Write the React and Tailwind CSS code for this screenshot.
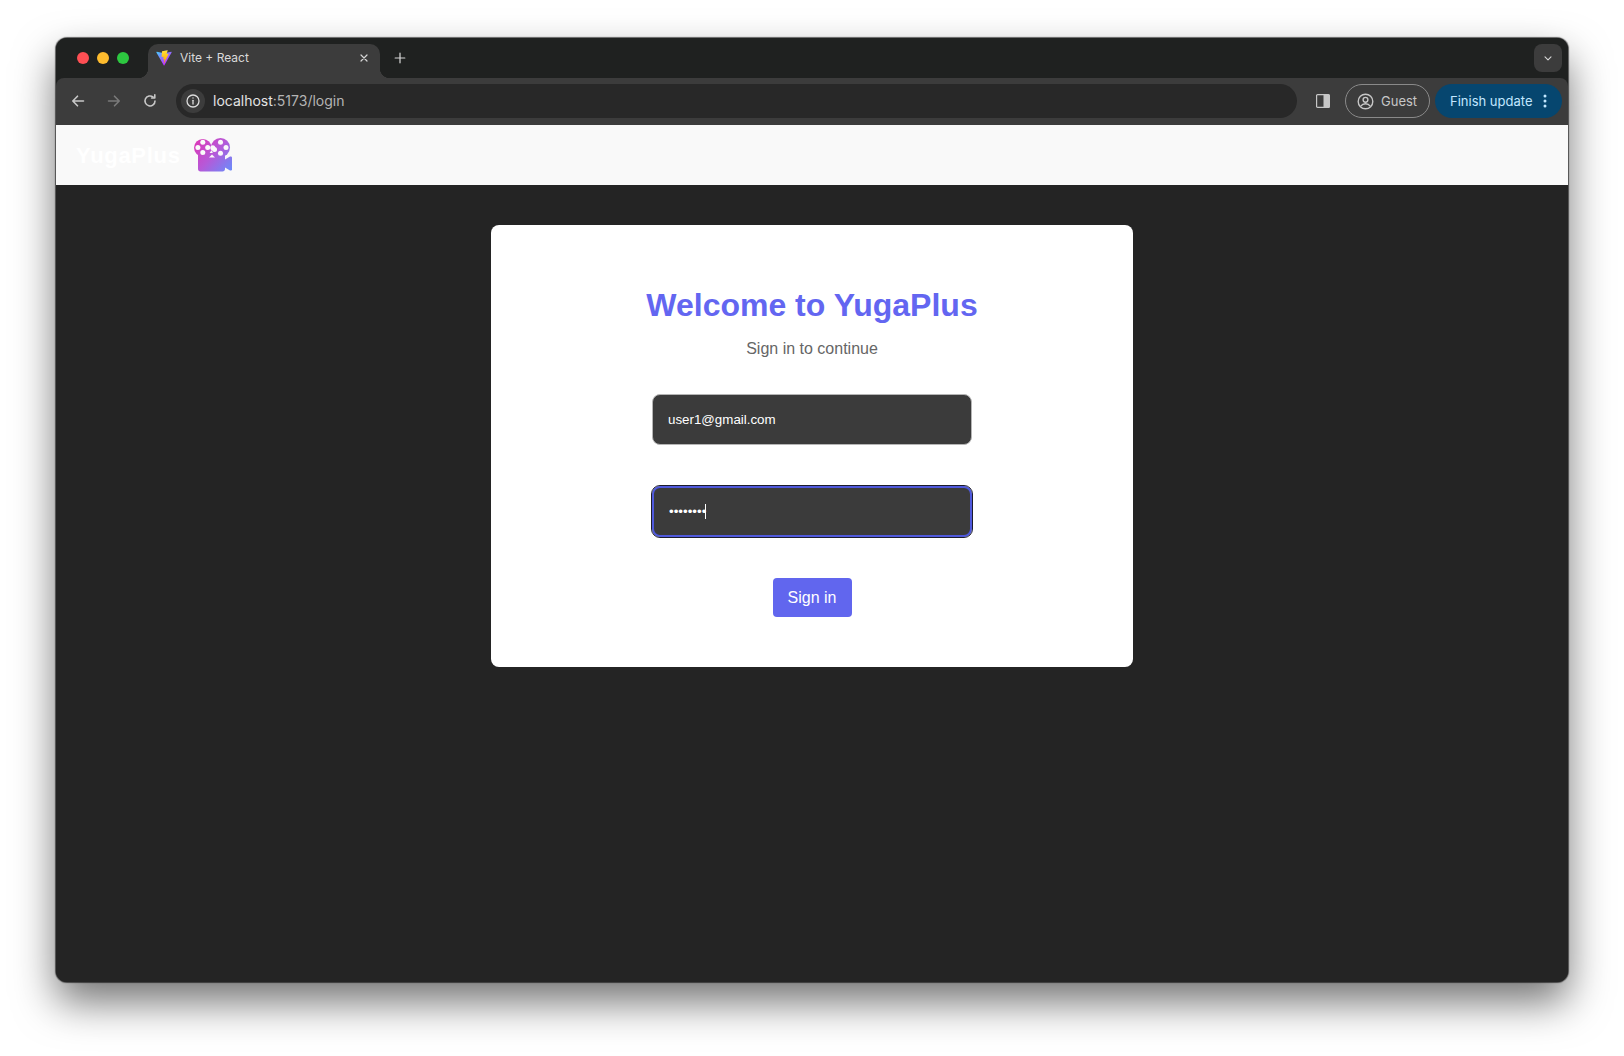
import React from "react";

function ViteIcon() {
  return (
    <svg width="16" height="16" viewBox="0 0 410 404" fill="none">
      <defs>
        <linearGradient id="va" x1="6" y1="33" x2="235" y2="344" gradientUnits="userSpaceOnUse">
          <stop stopColor="#41D1FF" />
          <stop offset="1" stopColor="#BD34FE" />
        </linearGradient>
        <linearGradient id="vb" x1="194.65" y1="8.82" x2="236.08" y2="292.99" gradientUnits="userSpaceOnUse">
          <stop stopColor="#FFEA83" />
          <stop offset="0.083" stopColor="#FFDD35" />
          <stop offset="1" stopColor="#FFA800" />
        </linearGradient>
      </defs>
      <path d="M399.641 59.5246L215.643 388.545C211.844 395.338 202.084 395.378 198.228 388.618L10.5817 59.5563C6.38087 52.1896 12.6802 43.2665 21.0281 44.7586L205.223 77.6824C206.398 77.8924 207.601 77.8904 208.776 77.6763L389.119 44.8058C397.439 43.2894 403.768 52.1434 399.641 59.5246Z" fill="url(#va)" />
      <path d="M292.965 1.5744L156.801 28.2552C154.563 28.6937 152.906 30.5903 152.771 32.8664L144.395 174.33C144.198 177.662 147.258 180.248 150.51 179.498L188.42 170.749C191.967 169.931 195.172 173.055 194.443 176.622L183.18 231.775C182.422 235.487 185.907 238.661 189.532 237.56L212.947 230.446C216.577 229.344 220.065 232.527 219.297 236.242L201.398 322.875C200.278 328.294 207.486 331.249 210.492 326.603L212.5 323.5L323.454 102.072C325.312 98.3645 322.108 94.137 318.036 94.9228L279.014 102.454C275.347 103.161 272.227 99.746 273.262 96.1583L298.731 7.86689C299.767 4.27314 296.636 0.855181 292.965 1.5744Z" fill="url(#vb)" />
    </svg>
  );
}

function FilmIcon() {
  return (
    <svg width="38" height="34" viewBox="0 0 38 34">
      <defs>
        <linearGradient id="film" x1="2" y1="2" x2="36" y2="32" gradientUnits="userSpaceOnUse">
          <stop stopColor="#dc38b8" />
          <stop offset="0.5" stopColor="#b659d8" />
          <stop offset="1" stopColor="#6f88f8" />
        </linearGradient>
      </defs>
      <circle cx="8.8" cy="9.8" r="8.8" fill="url(#film)" />
      <circle cx="26.5" cy="9.5" r="9.5" fill="url(#film)" />
      <path
        fill="url(#film)"
        d="M4 15H31V21.5L36 18.6C36.8 18.2 38 18.6 38 19.6V31.4C38 32.4 36.8 32.9 36 32.4L31 29.5V31C31 32.6 30 33.5 28.5 33.5H6.5C5 33.5 4 32.5 4 31Z"
      />
      {[[8.8, 4.3], [3.9, 9.4], [13.7, 9.4], [8.8, 14.5], [20.5, 11.5], [26.5, 4.3], [32, 9.5], [26.5, 15.2], [18.8, 9.8]].map(([x, y], i) => (
        <circle key={i} cx={x} cy={y} r="2.5" fill="#fafafa" />
      ))}
      <path d="M15 19.5L18 16.5L21 19.5Z" fill="#fafafa" />
    </svg>
  );
}

function Stroke({ children, size = 16, w = 1.6, color = "#c7c7c7" }) {
  return (
    <svg width={size} height={size} viewBox="0 0 16 16" fill="none" stroke={color} strokeWidth={w} strokeLinecap="round" strokeLinejoin="round">
      {children}
    </svg>
  );
}

export default function App() {
  return (
    <div className="w-[1624px] h-[1056px] bg-white overflow-hidden pt-[38px] pl-[56px] font-['Liberation_Sans',Arial,sans-serif]">
      <div className="w-[1512px] h-[944px] flex flex-col rounded-[11px] overflow-hidden bg-[#242424] shadow-[0_20px_42px_rgba(0,0,0,0.55),0_0_1px_1px_rgba(90,90,90,0.9)]">
        {/* tab strip */}
        <div className="h-[40px] shrink-0 flex bg-[#1f2120] pt-[6px] font-['Inter',sans-serif]">
          <div className="w-[92px] h-[28px] flex items-center gap-2 pl-[21px]">
            <span className="w-3 h-3 rounded-full bg-[#fe4f54]" />
            <span className="w-3 h-3 rounded-full bg-[#febc2e]" />
            <span className="w-3 h-3 rounded-full bg-[#2dc840]" />
          </div>
          <div className="relative w-[232px] h-[34px] flex items-center bg-[#3c3c3c] rounded-t-[10px] pl-2 pr-[10px] pb-[6px]">
            <span className="absolute left-[-10px] bottom-0 w-[10px] h-[10px] bg-[radial-gradient(circle_at_0_0,transparent_10px,#3c3c3c_10.5px)]" />
            <span className="absolute right-[-10px] bottom-0 w-[10px] h-[10px] bg-[radial-gradient(circle_at_100%_0,transparent_10px,#3c3c3c_10.5px)]" />
            <ViteIcon />
            <span className="ml-2 text-[12px] text-[#d9d9d9] flex-1">Vite + React</span>
            <Stroke size={12} w={1.6} color="#d6d6d6"><path d="M4 4L12 12M12 4L4 12" /></Stroke>
          </div>
          <div className="w-[40px] h-[28px] flex items-center justify-center">
            <Stroke size={14} w={1.4} color="#d6d6d6"><path d="M8 2.5V13.5M2.5 8H13.5" /></Stroke>
          </div>
          <div className="flex-1" />
          <div className="w-[28px] h-[28px] mr-[6px] rounded-[8px] bg-[#3c3c3c] flex items-center justify-center">
            <Stroke size={12} w={1.5} color="#d6d6d6"><path d="M4 6.5L8 10.5L12 6.5" /></Stroke>
          </div>
        </div>

        {/* toolbar */}
        <div className="h-[47px] shrink-0 bg-[#1f2120]">
          <div className="h-full flex items-center rounded-t-[8px] bg-[#3c3c3c] pr-[6px] pb-[1px] font-['Inter',sans-serif]">
            <div className="w-[120px] flex items-center pl-[14px]">
              <div className="w-4 flex justify-center"><Stroke><path d="M13.5 8H3M7.5 3.2L2.8 8L7.5 12.8" /></Stroke></div>
              <div className="w-4 ml-5 flex justify-center"><Stroke color="#7a7a7a"><path d="M2.5 8H13M8.5 3.2L13.2 8L8.5 12.8" /></Stroke></div>
              <div className="w-4 ml-5 flex justify-center">
                <Stroke><path d="M13 8A5 5 0 1 1 11.2 4.1" /><path d="M12.8 1.8V5H9.6" /></Stroke>
              </div>
            </div>
            <div className="w-[1121px] h-[34px] rounded-full bg-[#282828] flex items-center pl-[5px]">
              <div className="w-6 h-6 rounded-full bg-[#3c3c3c] flex items-center justify-center">
                <Stroke size={16} w={1.3} color="#dcdcdc"><circle cx="8" cy="8" r="6" /><path d="M8 7.3V11" /><path d="M8 4.9V5" /></Stroke>
              </div>
              <span className="ml-[8px] mb-[1px] text-[14px] text-[#e3e3e3]">localhost<span className="text-[#b4b4b4]">:5173/login</span></span>
            </div>
            <div className="w-[48px] flex justify-center pl-[3px]">
              <svg width="14" height="14" viewBox="0 0 14 14"><rect x="0.6" y="0.6" width="12.8" height="12.8" rx="1" fill="none" stroke="#c7c7c7" strokeWidth="1.2" /><rect x="7.5" y="0.6" width="6" height="12.8" fill="#c7c7c7" /></svg>
            </div>
            <div className="w-[85px] h-[34px] rounded-full border border-[#8a8a8a] flex items-center pl-[11px]">
              <svg width="17" height="17" viewBox="0 0 17 17" fill="none" stroke="#c7c7c7" strokeWidth="1.4"><circle cx="8.5" cy="8.5" r="7.3" /><circle cx="8.5" cy="6.8" r="2.4" /><path d="M3.8 13.2C5 11.4 6.5 10.8 8.5 10.8C10.5 10.8 12 11.4 13.2 13.2" /></svg>
              <span className="ml-[7px] mt-[1px] text-[13px] text-[#c7c7c7]">Guest</span>
            </div>
            <div className="ml-[5px] w-[127px] h-[34px] rounded-full bg-[#06466f] flex items-center justify-between pl-[15px] pr-[15px]">
              <span className="mt-[1px] text-[13px] text-[#c2e7ff]">Finish update</span>
              <svg width="4" height="14" viewBox="0 0 4 14" fill="#c2e7ff"><circle cx="2" cy="2" r="1.5" /><circle cx="2" cy="7" r="1.5" /><circle cx="2" cy="12" r="1.5" /></svg>
            </div>
          </div>
        </div>

        {/* app header */}
        <div className="h-[60px] shrink-0 bg-[#f9f9f9] flex items-center pl-[20px]">
          <span className="w-[118px] text-[22px] font-bold tracking-[0.7px] text-white">YugaPlus</span>
          <span className="flex"><FilmIcon /></span>
        </div>

        {/* page body */}
        <div className="flex-1 flex justify-center items-start pt-[40px] bg-[#242424]">
          <div className="w-[642px] h-[442px] bg-white rounded-[8px] flex flex-col items-center pt-[62px]">
            <h1 className="text-[32px] leading-[37px] font-bold text-[#6366f1]">Welcome to YugaPlus</h1>
            <p className="mt-[16px] text-[16px] leading-[18px] text-[#666666]">Sign in to continue</p>
            <input
              readOnly
              value="user1@gmail.com"
              className="mt-[36px] w-[320px] h-[51px] px-[15px] rounded-[8px] border border-[#b5b5b5] bg-[#3b3b3b] text-white text-[13.33px] outline-none"
            />
            <div className="relative mt-[41px]">
              <input
                readOnly
                type="password"
                value="password"
                className="block w-[320px] h-[51px] px-[15px] rounded-[8px] border-2 border-[#4f59dc] bg-[#3b3b3b] text-white text-[13.33px] outline outline-1 outline-[#1c1c2c]"
              />
              <span className="absolute left-[53px] top-[18px] w-px h-[15px] bg-white" />
            </div>
            <button className="mt-[41px] w-[79px] h-[39px] rounded-[4px] bg-[#6166ee] text-white text-[16px]">Sign in</button>
          </div>
        </div>
      </div>
    </div>
  );
}
